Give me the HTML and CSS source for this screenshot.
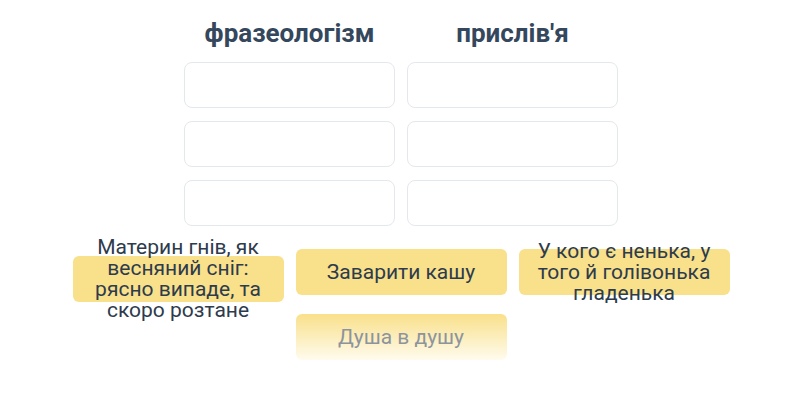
FILE: index.html
```html
<!DOCTYPE html>
<html lang="uk">
<head>
<meta charset="utf-8">
<title>Фразеологізм чи прислів'я</title>
<link rel="stylesheet" href="styles.css">
</head>
<body>
<main class="game">
  <section class="board">
    <div class="board__heads">
      <h2 class="board__title">фразеологізм</h2>
      <h2 class="board__title">прислів'я</h2>
    </div>
    <div class="board__slots">
      <div class="slot"></div>
      <div class="slot"></div>
      <div class="slot"></div>
      <div class="slot"></div>
      <div class="slot"></div>
      <div class="slot"></div>
    </div>
  </section>
  <section class="pool">
    <div class="card card--low"><span>Материн гнів, як весняний сніг: рясно випаде, та скоро розтане</span></div>
    <div class="card"><span>Заварити кашу</span></div>
    <div class="card"><span>У кого є ненька, у того й голівонька гладенька</span></div>
    <div class="card card--next"><span>Душа в душу</span></div>
  </section>
</main>
</body>
</html>
```

FILE: styles.css
```css
* { box-sizing: border-box; }

body {
  margin: 0;
  background: #ffffff;
  font-family: Roboto, "Noto Sans", sans-serif;
  color: #2c3e50;
}

.game {
  padding: 16px 0 0 2px;
}

.board__heads,
.board__slots {
  display: grid;
  grid-template-columns: 211px 211px;
  column-gap: 12px;
  justify-content: center;
}

.board__title {
  margin: 0;
  height: 34px;
  text-align: center;
  font-size: 26px;
  font-weight: 700;
  line-height: 34px;
  color: #34475c;
}

.board__slots {
  margin-top: 12px;
  grid-auto-rows: 46px;
  row-gap: 13px;
}

.slot {
  border: 1.5px solid #e3e8ed;
  border-radius: 8px;
  background: #ffffff;
}

.pool {
  margin-top: 23px;
  display: grid;
  grid-template-columns: repeat(3, 211px);
  grid-auto-rows: 46px;
  column-gap: 12px;
  row-gap: 19px;
  justify-content: center;
  align-items: start;
}

.card {
  height: 46px;
  display: flex;
  align-items: center;
  justify-content: center;
  padding: 0 14px;
  border-radius: 6px;
  background: #f9e08b;
  text-align: center;
  font-size: 21px;
  line-height: 21px;
  color: #2d3b4c;
}

.card--low {
  margin-top: 7px;
}

.card--next {
  grid-column: 2;
  background: linear-gradient(to bottom, #f9e08b 0%, #fcefc0 55%, #fffbee 100%);
  color: #8d949d;
}
```
